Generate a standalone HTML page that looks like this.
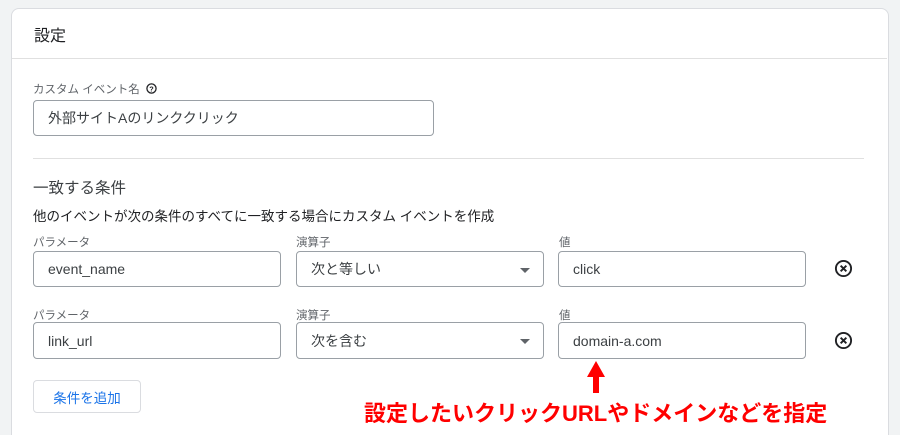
<!DOCTYPE html>
<html><head><meta charset="utf-8"><style>
html,body{margin:0;width:900px;height:435px;overflow:hidden}
body{background:#f1f3f4;font-family:"Liberation Sans","Noto Sans CJK JP",sans-serif;color:#3c4043;position:relative}
.card{position:absolute;left:11px;top:8px;width:876px;height:440px;background:#fff;border:1px solid #dadce0;border-radius:8px}
.a{position:absolute}
.lbl{position:absolute;font-size:11.5px;color:#5f6368}
.in{position:absolute;border:1px solid #9aa0a6;border-radius:4px;box-sizing:border-box;font-size:14px;color:#3c4043;padding-left:14px;display:flex;align-items:center;background:#fff}
.dd::after{content:"";position:absolute;right:13px;top:16px;border-left:5px solid transparent;border-right:5px solid transparent;border-top:5px solid #5f6368}
</style></head><body>
<div class="card"></div>
<div class="a" style="left:12px;top:58px;width:875px;height:1px;background:#e0e0e0"></div>
<div class="a" style="left:34px;top:22px;font-size:16px;color:#202124">設定</div>
<div class="lbl" style="left:33px;top:81px">カスタム イベント名 <svg width="11" height="11" viewBox="0 0 12 12" style="vertical-align:-1px;margin-left:3px"><circle cx="6" cy="6" r="5" fill="none" stroke="#202124" stroke-width="1.4"/><text x="6" y="9" font-size="8" text-anchor="middle" fill="#202124" font-weight="bold">?</text></svg></div>
<div class="in" style="left:33px;top:100px;width:401px;height:36px">外部サイトAのリンククリック</div>
<div class="a" style="left:33px;top:158px;width:831px;height:1px;background:#e0e0e0"></div>
<div class="a" style="left:33px;top:176px;font-size:15.5px;color:#3c4043">一致する条件</div>
<div class="a" style="left:33px;top:205px;font-size:13.5px;color:#202124">他のイベントが次の条件のすべてに一致する場合にカスタム イベントを作成</div>

<div class="lbl" style="left:33px;top:234px">パラメータ</div>
<div class="lbl" style="left:296px;top:234px">演算子</div>
<div class="lbl" style="left:559px;top:234px">値</div>
<div class="in" style="left:33px;top:251px;width:248px;height:36px">event_name</div>
<div class="in dd" style="left:296px;top:251px;width:248px;height:36px">次と等しい</div>
<div class="in" style="left:558px;top:251px;width:248px;height:36px">click</div>

<div class="lbl" style="left:33px;top:307px">パラメータ</div>
<div class="lbl" style="left:296px;top:307px">演算子</div>
<div class="lbl" style="left:559px;top:307px">値</div>
<div class="in" style="left:33px;top:322px;width:248px;height:37px">link_url</div>
<div class="in dd" style="left:296px;top:322px;width:248px;height:37px">次を含む</div>
<div class="in" style="left:558px;top:322px;width:248px;height:37px">domain-a.com</div>

<svg class="a" style="left:834px;top:259px" width="19" height="19" viewBox="0 0 20 20"><circle cx="10" cy="10" r="8" fill="none" stroke="#202124" stroke-width="2"/><path d="M7 7L13 13M13 7L7 13" stroke="#202124" stroke-width="2"/></svg>
<svg class="a" style="left:834px;top:331px" width="19" height="19" viewBox="0 0 20 20"><circle cx="10" cy="10" r="8" fill="none" stroke="#202124" stroke-width="2"/><path d="M7 7L13 13M13 7L7 13" stroke="#202124" stroke-width="2"/></svg>

<div class="a" style="left:33px;top:380px;width:108px;height:33px;border:1px solid #dadce0;border-radius:4px;box-sizing:border-box;color:#1a73e8;font-size:13.5px;display:flex;align-items:center;justify-content:center">条件を追加</div>

<svg class="a" style="left:586px;top:360px" width="20" height="33" viewBox="0 0 20 33"><path d="M10 1L1 17H7V33H13V17H19Z" fill="#ff0000"/></svg>
<div class="a" style="left:364px;top:396px;font-size:22px;letter-spacing:0;font-weight:bold;color:#ff0000;white-space:nowrap">設定したいクリックURLやドメインなどを指定</div>
</body></html>
